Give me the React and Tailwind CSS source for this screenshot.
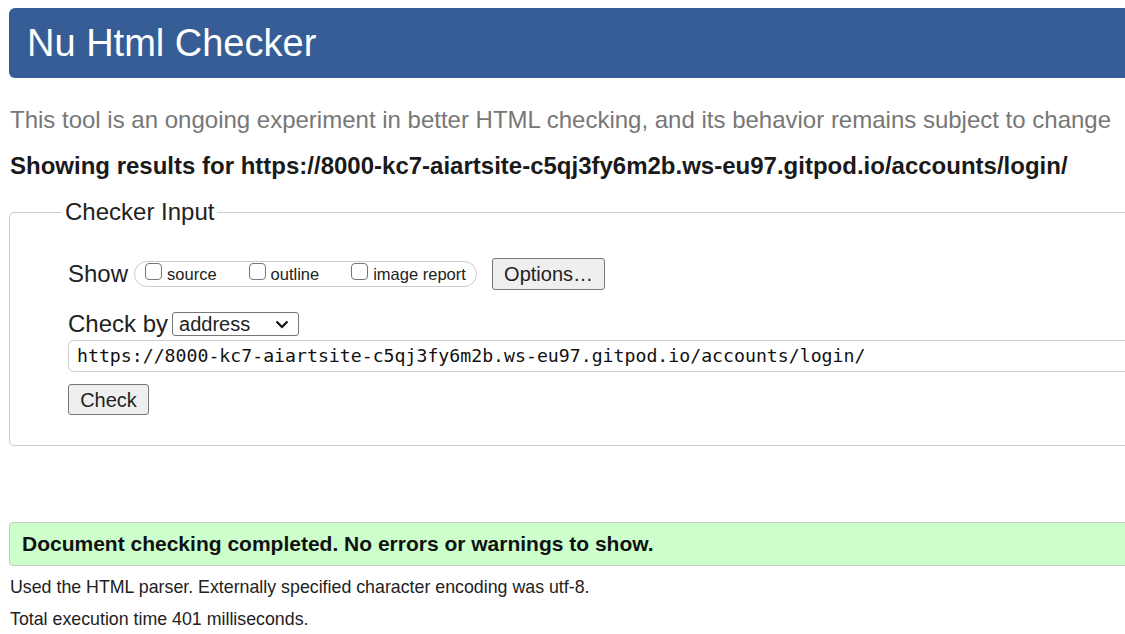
import React from 'react';

const Checkbox = ({ label }) => (
  <label className="flex items-center shrink-0">
    <input
      type="checkbox"
      className="appearance-none shrink-0 w-[17px] h-[17px] m-0 mb-[5px] bg-white border border-[#767676] rounded-[4px]"
    />
    <span className="ml-[5px] text-[16.5px] leading-[20px] whitespace-nowrap">{label}</span>
  </label>
);

const App = () => {
  return (
    <div
      className="w-[1125px] h-[634px] overflow-hidden bg-white text-[#222]"
      style={{ fontFamily: '"Liberation Sans", Arial, sans-serif' }}
    >
      <div className="ml-[9px] w-[1200px]">
        <header className="mt-[8px] h-[70px] flex items-center pl-[18px] bg-[#365d95] rounded-l-[6px]">
          <h1 className="text-[38px] leading-[44px] text-white font-normal">Nu Html Checker</h1>
        </header>

        <p className="mt-[27px] ml-[1px] text-[24px] leading-[30px] text-[#777]">
          This tool is an ongoing experiment in better HTML checking, and its behavior remains subject to change
        </p>

        <p className="mt-[18px] ml-[1px] text-[24px] leading-[26px] font-bold text-[#1a1a1a]">
          Showing results for https://8000-kc7-aiartsite-c5qj3fy6m2b.ws-eu97.gitpod.io/accounts/login/
        </p>

        <fieldset className="mt-[20px] border border-[#ccc] rounded-[5px] pl-[58px] pt-[33px] pb-[30px]">
          <legend className="ml-[-6px] px-[3px] text-[24px] leading-[26px]">Checker Input</legend>

          <div className="flex items-center h-[32px]">
            <span className="text-[24px] leading-[28px]">Show</span>
            <div className="ml-[6px] flex items-center shrink-0 h-[26px] w-[343px] pl-[10px] gap-[32px] border border-[#ccc] rounded-full">
              <Checkbox label="source" />
              <Checkbox label="outline" />
              <Checkbox label="image report" />
            </div>
            <button className="ml-[15px] h-[32px] w-[113px] bg-[#efefef] border border-[#767676] rounded-[3px] text-[20px] leading-[24px]">
              Options…
            </button>
          </div>

          <div className="mt-[21px] flex items-center h-[26px]">
            <span className="text-[24px] leading-[28px]">Check by</span>
            <div className="ml-[4px] h-[24px] w-[127px] flex items-center justify-between pl-[6px] pr-[9px] border border-[#767676] rounded-[3px]">
              <span className="text-[20px] leading-[22px]">address</span>
              <svg width="14" height="9" viewBox="0 0 14 9" fill="none">
                <path d="M1.5 1.5 L7 7 L12.5 1.5" stroke="#111" strokeWidth="2.2" />
              </svg>
            </div>
          </div>

          <div
            className="mt-[3px] h-[32px] flex items-center pl-[8px] border border-[#ccc] rounded-l-[6px] text-[18.2px] text-[#111]"
            style={{ fontFamily: '"DejaVu Sans Mono", "Liberation Mono", monospace' }}
          >
            https://8000-kc7-aiartsite-c5qj3fy6m2b.ws-eu97.gitpod.io/accounts/login/
          </div>

          <button className="mt-[12px] h-[31px] w-[81px] bg-[#efefef] border border-[#767676] rounded-[3px] text-[20px] leading-[24px]">
            Check
          </button>
        </fieldset>

        <div className="mt-[76px] h-[44px] flex items-center pl-[12px] bg-[#ccffcc] border border-[#c8c8c8] rounded-l-[4px]">
          <span className="text-[21px] leading-[24px] font-bold text-[#111]">
            Document checking completed. No errors or warnings to show.
          </span>
        </div>

        <p className="mt-[11px] ml-[1px] text-[17.8px] leading-[20px]">
          Used the HTML parser. Externally specified character encoding was utf-8.
        </p>
        <p className="mt-[12px] ml-[1px] text-[17.8px] leading-[20px]">
          Total execution time 401 milliseconds.
        </p>
      </div>
    </div>
  );
};

export default App;
